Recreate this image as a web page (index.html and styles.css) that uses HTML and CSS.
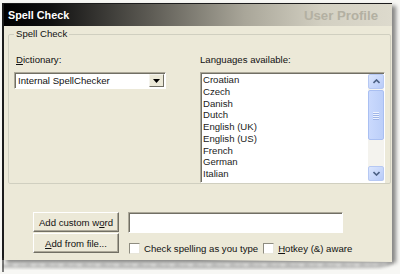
FILE: index.html
```html
<!DOCTYPE html>
<html lang="en">
<head>
    <meta charset="UTF-8">
    <title>Spell Check</title>
    <link rel="stylesheet" href="styles.css">
</head>
<body>
    <div class="window">
        <div class="sheet">
            <div class="titlebar">
                <span class="title">Spell Check</span>
                <span class="profile">User Profile</span>
            </div>

            <fieldset class="group">
                <legend>Spell Check</legend>
                <div class="cols">
                    <div class="dict">
                        <div class="caption"><u>D</u>ictionary:</div>
                        <div class="select">
                            <span>Internal SpellChecker</span>
                            <span class="drop">
                                <svg width="7" height="4" viewBox="0 0 7 4"><path d="M0 0h7L3.5 4z" fill="#000"/></svg>
                            </span>
                        </div>
                    </div>
                    <div class="langs">
                        <div class="caption">Languages available:</div>
                        <div class="listbox">
                            <ul class="items">
                                <li>Croatian</li>
                                <li>Czech</li>
                                <li>Danish</li>
                                <li>Dutch</li>
                                <li>English (UK)</li>
                                <li>English (US)</li>
                                <li>French</li>
                                <li>German</li>
                                <li>Italian</li>
                                <li>Latvian</li>
                            </ul>
                            <div class="scrollbar">
                                <div class="sbtn">
                                    <svg width="7" height="5" viewBox="0 0 7 5"><path d="M0.5 4L3.5 1L6.5 4" fill="none" stroke="#4d6185" stroke-width="1.6"/></svg>
                                </div>
                                <div class="thumb">
                                    <span></span><span></span><span></span><span></span>
                                </div>
                                <div class="track"></div>
                                <div class="sbtn">
                                    <svg width="7" height="5" viewBox="0 0 7 5"><path d="M0.5 1L3.5 4L6.5 1" fill="none" stroke="#4d6185" stroke-width="1.6"/></svg>
                                </div>
                            </div>
                        </div>
                    </div>
                </div>
            </fieldset>

            <div class="actions">
                <div class="buttons">
                    <div class="btn">Add custom w<u>o</u>rd</div>
                    <div class="btn"><u>A</u>dd from file...</div>
                </div>
                <div class="fields">
                    <div class="textbox"></div>
                    <div class="checks">
                        <span class="check"></span>
                        <span class="check-label">Check spelling as you type</span>
                        <span class="check"></span>
                        <span class="check-label"><u>H</u>otkey (&amp;) aware</span>
                    </div>
                </div>
            </div>
        </div>

        <svg class="torn" width="392" height="14" viewBox="0 0 392 14">
            <defs>
                <filter id="blur"><feGaussianBlur stdDeviation="1.6"/></filter>
            </defs>
            <path d="M0 6 5 7 9 5 13 8 18 6 22 7 27 5 31 8 36 6 41 8 45 5 50 7 55 6 59 8 64 5 68 7 73 6 78 8 82 5 87 7 92 6 96 8 101 5 106 7 110 6 115 8 119 5 124 7 129 6 133 8 138 5 143 7 147 6 152 8 156 5 161 7 166 6 170 8 175 5 180 7 184 6 189 8 193 5 198 7 203 6 207 8 212 5 217 7 221 6 226 8 230 5 235 7 240 6 244 8 249 5 254 7 258 6 263 8 267 5 272 7 277 6 281 8 286 5 291 7 295 6 300 8 304 5 309 7 314 6 318 8 323 5 328 7 332 6 337 8 341 5 346 7 351 6 355 8 360 5 365 7 369 6 374 7 378 5 383 6 387 3 392 1 392 5 387 8 378 10 300 11 150 11 0 10Z" fill="#8a8a8a" opacity="0.55" filter="url(#blur)"/>
            <path d="M0 0H390V0 387 3 383 4 378 3 374 5 369 4 365 5 360 3 355 6 351 4 346 5 341 3 337 6 332 4 328 5 323 3 318 6 314 4 309 5 304 3 300 6 295 4 291 5 286 3 281 6 277 4 272 5 267 3 263 6 258 4 254 5 249 3 244 6 240 4 235 5 230 3 226 6 221 4 217 5 212 3 207 6 203 4 198 5 193 3 189 6 184 4 180 5 175 3 170 6 166 4 161 5 156 3 152 6 147 4 143 5 138 3 133 6 129 4 124 5 119 3 115 6 110 4 106 5 101 3 96 6 92 4 87 5 82 3 78 6 73 4 68 5 64 3 59 6 55 4 50 5 45 3 41 6 36 4 31 5 27 3 22 5 18 4 13 6 9 3 5 5 2 4 0 4Z" fill="#ece9d8"/>
            <path d="M1 0V4 5 5 9 3 13 6 18 4 22 5 27 3 31 5 36 4 41 6 45 3 50 5 55 4 59 6 64 3 68 5 73 4 78 6 82 3 87 5 92 4 96 6 101 3 106 5 110 4 115 6 119 3 124 5 129 4 133 6 138 3 143 5 147 4 152 6 156 3 161 5 166 4 170 6 175 3 180 5 184 4 189 6 193 3 198 5 203 4 207 6 212 3 217 5 221 4 226 6 230 3 235 5 240 4 244 6 249 3 254 5 258 4 263 6 267 3 272 5 277 4 281 6 286 3 291 5 295 4 300 6 304 3 309 5 314 4 318 6 323 3 328 5 332 4 337 6 341 3 346 5 351 4 355 6 360 3 365 5 369 4 374 5 378 3 383 4 387 2 390 0" fill="none" stroke="#2a2a2a" stroke-width="1.2"/>
        </svg>
    </div>
</body>
</html>
```

FILE: styles.css
```css
*{
    margin: 0;
    padding: 0;
    box-sizing: border-box;
    list-style: none;
}

body{
    background: #f7f7f4;
    font-family: "Liberation Sans", Arial, sans-serif;
    font-size: 9.6px;
    color: #111;
}

u{
    text-decoration: underline;
    text-underline-offset: 1px;
}

.window{
    width: 390px;
    margin: 3px 0 0 2px;
}

.sheet{
    background: #ece9d8;
    border-top: 1px solid #1c1c1c;
    border-left: 2px solid #1c1c1c;
    height: 257px;
    box-shadow: 4px 3px 4px rgba(0, 0, 0, 0.45);
}

.torn{
    display: block;
    margin-top: -2px;
}

.titlebar{
    height: 22px;
    display: flex;
    align-items: center;
    justify-content: space-between;
    padding: 0 14px 0 4px;
    background: linear-gradient(to right, #000 0%, #111 12%, #5e5c55 38%, #a9a699 62%, #d3d0c2 82%, #dddacd 100%);
}

.title{
    color: #fff;
    font-weight: bold;
    font-size: 10.8px;
}

.profile{
    color: #b3b0a2;
    font-weight: bold;
    font-size: 13.2px;
}

.group{
    margin: 2px 1px 0 4px;
    border: 1px solid #d0cfc0;
    border-radius: 2px;
    padding: 0 4px 0 5px;
}

.group legend{
    line-height: 12px;
    padding: 0 2px;
    color: #111;
}

.cols{
    display: grid;
    grid-template-columns: 152px 185px;
    column-gap: 34px;
    padding-top: 13px;
}

.caption{
    line-height: 13px;
    margin-bottom: 6px;
    padding-left: 2px;
}

.langs .caption{
    padding-left: 0;
}

.select{
    height: 17px;
    background: #fff;
    border: 1px solid;
    border-color: #aca899 #fff #fff #aca899;
    box-shadow: inset 1px 1px 0 #716f64;
    display: flex;
    align-items: center;
    justify-content: space-between;
    padding: 0 1px 0 3px;
}

.drop{
    width: 15px;
    height: 13px;
    background: #ece9d8;
    border: 1px solid;
    border-color: #f5f4ee #716f64 #716f64 #f5f4ee;
    display: flex;
    align-items: center;
    justify-content: center;
}

.listbox{
    height: 111px;
    background: #fff;
    border: 1px solid;
    border-color: #aca899 #fff #fff #aca899;
    box-shadow: inset 1px 1px 0 #716f64;
    display: flex;
    overflow: hidden;
}

.items{
    flex: 1;
    padding: 1px 0 0 2px;
    overflow: hidden;
}

.items li{
    line-height: 11.75px;
    color: #222;
}

.scrollbar{
    width: 16px;
    margin: 1px 0 1px 0;
    display: flex;
    flex-direction: column;
    background: #f4f3ee;
}

.sbtn{
    height: 15px;
    border: 1px solid #b6c8f3;
    border-radius: 2px;
    background: linear-gradient(135deg, #dbe6fe, #b8cbf8);
    display: flex;
    align-items: center;
    justify-content: center;
}

.thumb{
    height: 50px;
    margin-top: 1px;
    border: 1px solid #a9bff2;
    border-radius: 2px;
    background: linear-gradient(to right, #cad9fd, #bccff9);
    display: flex;
    flex-direction: column;
    align-items: center;
    justify-content: center;
    gap: 1px;
}

.thumb span{
    width: 6px;
    height: 1px;
    background: #eef3fe;
    box-shadow: 0 1px 0 #9fb5e8;
}

.track{
    flex: 1;
}

.actions{
    display: flex;
    gap: 9px;
    padding: 28px 0 0 29px;
}

.buttons{
    display: flex;
    flex-direction: column;
    gap: 1px;
}

.btn{
    width: 86px;
    height: 20px;
    display: flex;
    align-items: center;
    justify-content: center;
    background: #ece9d8;
    border: 1px solid;
    border-color: #fff #716f64 #716f64 #fff;
    box-shadow: inset -1px -1px 0 #aca899;
    color: #111;
}

.textbox{
    width: 215px;
    height: 21px;
    background: #fff;
    border: 1px solid;
    border-color: #aca899 #fff #fff #aca899;
    box-shadow: inset 1px 1px 0 #716f64;
}

.checks{
    display: flex;
    align-items: center;
    margin-top: 9px;
    padding-left: 1px;
    height: 13px;
}

.check{
    width: 11px;
    height: 11px;
    background: #fff;
    border: 1px solid;
    border-color: #8e8c80 #e8e6da #e8e6da #8e8c80;
}

.check-label{
    margin: 0 5px 0 4px;
}
```
